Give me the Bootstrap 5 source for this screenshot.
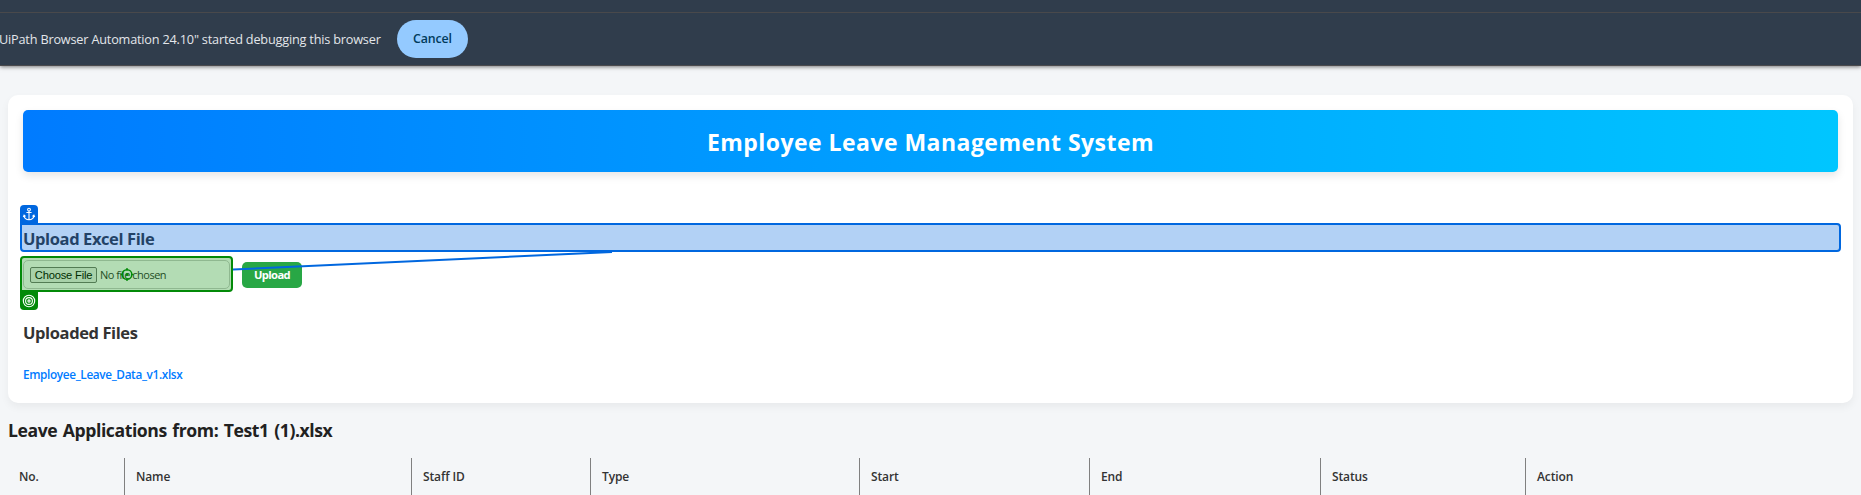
<!DOCTYPE html>
<html lang="en">
<head>
<meta charset="utf-8">
<title>Employee Leave Management System</title>
<link href="https://cdn.jsdelivr.net/npm/bootstrap@5.3.0/dist/css/bootstrap.min.css" rel="stylesheet">
<style>
body{font-family:"Open Sans","Noto Sans",sans-serif;background:#f4f6f8;color:#333;height:495px;overflow:hidden;font-size:12px}
.info-bar{height:66px;background:#303d4c;border-bottom:1px solid #4b4b4d;box-shadow:0 1px 4px rgba(0,0,0,.5);position:relative}
.tab-strip{height:13px;border-bottom:1px solid #49494b}
.info-row{height:52px;color:#e3e6ea;font-size:12.7px;letter-spacing:-.19px}
.info-text{width:398px;margin-left:-1px;padding-top:1px;white-space:nowrap}
.cancel-btn{width:71px;height:38px;background:#94caff;color:#003a5c;border-radius:19px;font-size:12.4px;font-weight:600;letter-spacing:-.15px;padding:1px 0 0;border:0}
.main-card{margin:29px 8px 0;height:308px;padding:15px;border:0;border-radius:10px;box-shadow:0 4px 8px rgba(0,0,0,.05)}
.title-banner{height:62px;border-radius:5px;background:linear-gradient(90deg,#007bff,#00c6ff);box-shadow:0 4px 8px rgba(0,0,0,.1);font-size:23px;font-weight:700;letter-spacing:.46px;color:#fff;padding-top:3px}
.sect-title{font-size:16.5px;font-weight:700;letter-spacing:-.4px;line-height:24px;margin:0;color:#333}
.anchor-zone{margin-top:55px;height:25px;position:relative}
.anchor-mark{position:absolute;left:-3px;right:-3px;top:-4px;height:29px;border:2px solid #0067df;border-radius:0 4px 4px 4px;background:rgba(0,103,223,.3)}
.tag{position:absolute;left:-2px;width:18px;height:19px}
.tag svg{display:block}
.tag-anchor{top:-20px;background:#0067df;border-radius:4px 4px 0 0}
.tag-target{bottom:-20px;padding-top:1px;background:#038a08;border-radius:0 0 4px 4px}
.form-line{margin-top:8px;height:29px}
.file-zone{width:207px;height:29px;border:1px solid #ccc;border-radius:5px;position:relative;padding-left:6px}
.choose-btn{width:67px;height:16px;border:1px solid #767676;border-radius:2px;background:#efefef;color:#000;font:11.2px/14px "Liberation Sans",Arial,sans-serif;letter-spacing:-.2px;text-align:center;white-space:nowrap}
.no-file{font-size:11px;letter-spacing:-.48px;margin-left:3px;padding-top:1px;white-space:nowrap}
.target-mark{position:absolute;left:-4px;top:-5px;width:213px;height:36px;border:2px solid #038a08;border-radius:4px 4px 4px 0;background:rgba(3,138,8,.3)}
.cross{position:absolute;left:97px;top:9px}
.link-line{position:absolute;left:209px;top:-10px;z-index:3}
.upload-btn{width:60px;height:26px;margin-left:12px;padding:0;border:0;border-radius:5px;background:#28a745;color:#fff;font-size:11.2px;font-weight:700;letter-spacing:-.62px;line-height:26px}
.files-title{margin-top:32px}
.file-link{display:block;margin:19px 0 0;color:#007bff;text-decoration:none;font-size:11.8px;font-weight:600;letter-spacing:-.36px;line-height:20px}
.page-title{font-size:17.6px;font-weight:700;letter-spacing:-.42px;word-spacing:1.4px;line-height:28px;margin:13px 0 0 8px;color:#212121}
.grid-head{margin:14px 8px 0;height:40px;grid-template-columns:117px 287px 179px 269px 230px 231px 205px 1fr}
.grid-head>div{border-right:1px solid #808080;padding:9px 0 0 11px;font-weight:600;font-size:12px;letter-spacing:-.12px;line-height:20px;color:#333}
.grid-head>div:last-child{border:0}
</style>
</head>
<body>
<header class="info-bar">
  <div class="tab-strip"></div>
  <div class="info-row d-flex align-items-center">
    <div class="info-text">UiPath Browser Automation 24.10" started debugging this browser</div>
    <button class="btn cancel-btn">Cancel</button>
  </div>
</header>
<main>
  <section class="card main-card">
    <div class="title-banner d-flex align-items-center justify-content-center">Employee Leave Management System</div>
    <div class="anchor-zone">
      <h3 class="sect-title">Upload Excel File</h3>
      <div class="anchor-mark">
        <span class="tag tag-anchor"><svg width="18" height="18" fill="none" stroke="#fff" stroke-width="1.1"><circle cx="9" cy="4.6" r="1.4"/><path d="M9 6v9M6.400 7.500h5.200M4 10.500c.4 2.900 2.200 4.200 5 4.200s4.600-1.300 5-4.200M3.300 12l.8-1.900 1.500 1.300M14.700 12l-.8-1.900-1.500 1.300"/></svg></span>
      </div>
    </div>
    <div class="form-line d-flex align-items-center">
      <div class="file-zone d-flex align-items-center">
        <div class="choose-btn">Choose File</div><span class="no-file">No file chosen</span>
        <div class="target-mark">
          <svg class="cross" width="16" height="16" viewBox="0 0 16 16" fill="none" stroke="#038a08" stroke-width="1.4"><circle cx="8" cy="7.500" r="4.800"/><path d="M8 1v2.500M8 11.500V14M1.500 7.500H4M12 7.500h2.500"/><circle cx="8" cy="7.500" r="1.500" fill="#038a08" stroke="none"/></svg>
          <span class="tag tag-target"><svg width="18" height="18" fill="none" stroke="#fff" stroke-width="1.100"><circle cx="9" cy="9" r="5.700"/><circle cx="9" cy="9" r="3.400"/><circle cx="9" cy="9" r="1.100"/></svg></span>
        </div>
        <svg class="link-line" width="380" height="20"><path d="M0 18.500 379 1" stroke="#0067df" stroke-width="2"/></svg>
      </div>
      <button class="btn upload-btn">Upload</button>
    </div>
    <h3 class="sect-title files-title">Uploaded Files</h3>
    <a class="file-link" href="#">Employee_Leave_Data_v1.xlsx</a>
  </section>
  <h2 class="page-title">Leave Applications from: Test1 (1).xlsx</h2>
  <div class="grid-head d-grid">
    <div>No.</div><div>Name</div><div>Staff ID</div><div>Type</div><div>Start</div><div>End</div><div>Status</div><div>Action</div>
  </div>
</main>
<script src="https://cdn.jsdelivr.net/npm/bootstrap@5.3.0/dist/js/bootstrap.bundle.min.js"></script>
</body>
</html>
